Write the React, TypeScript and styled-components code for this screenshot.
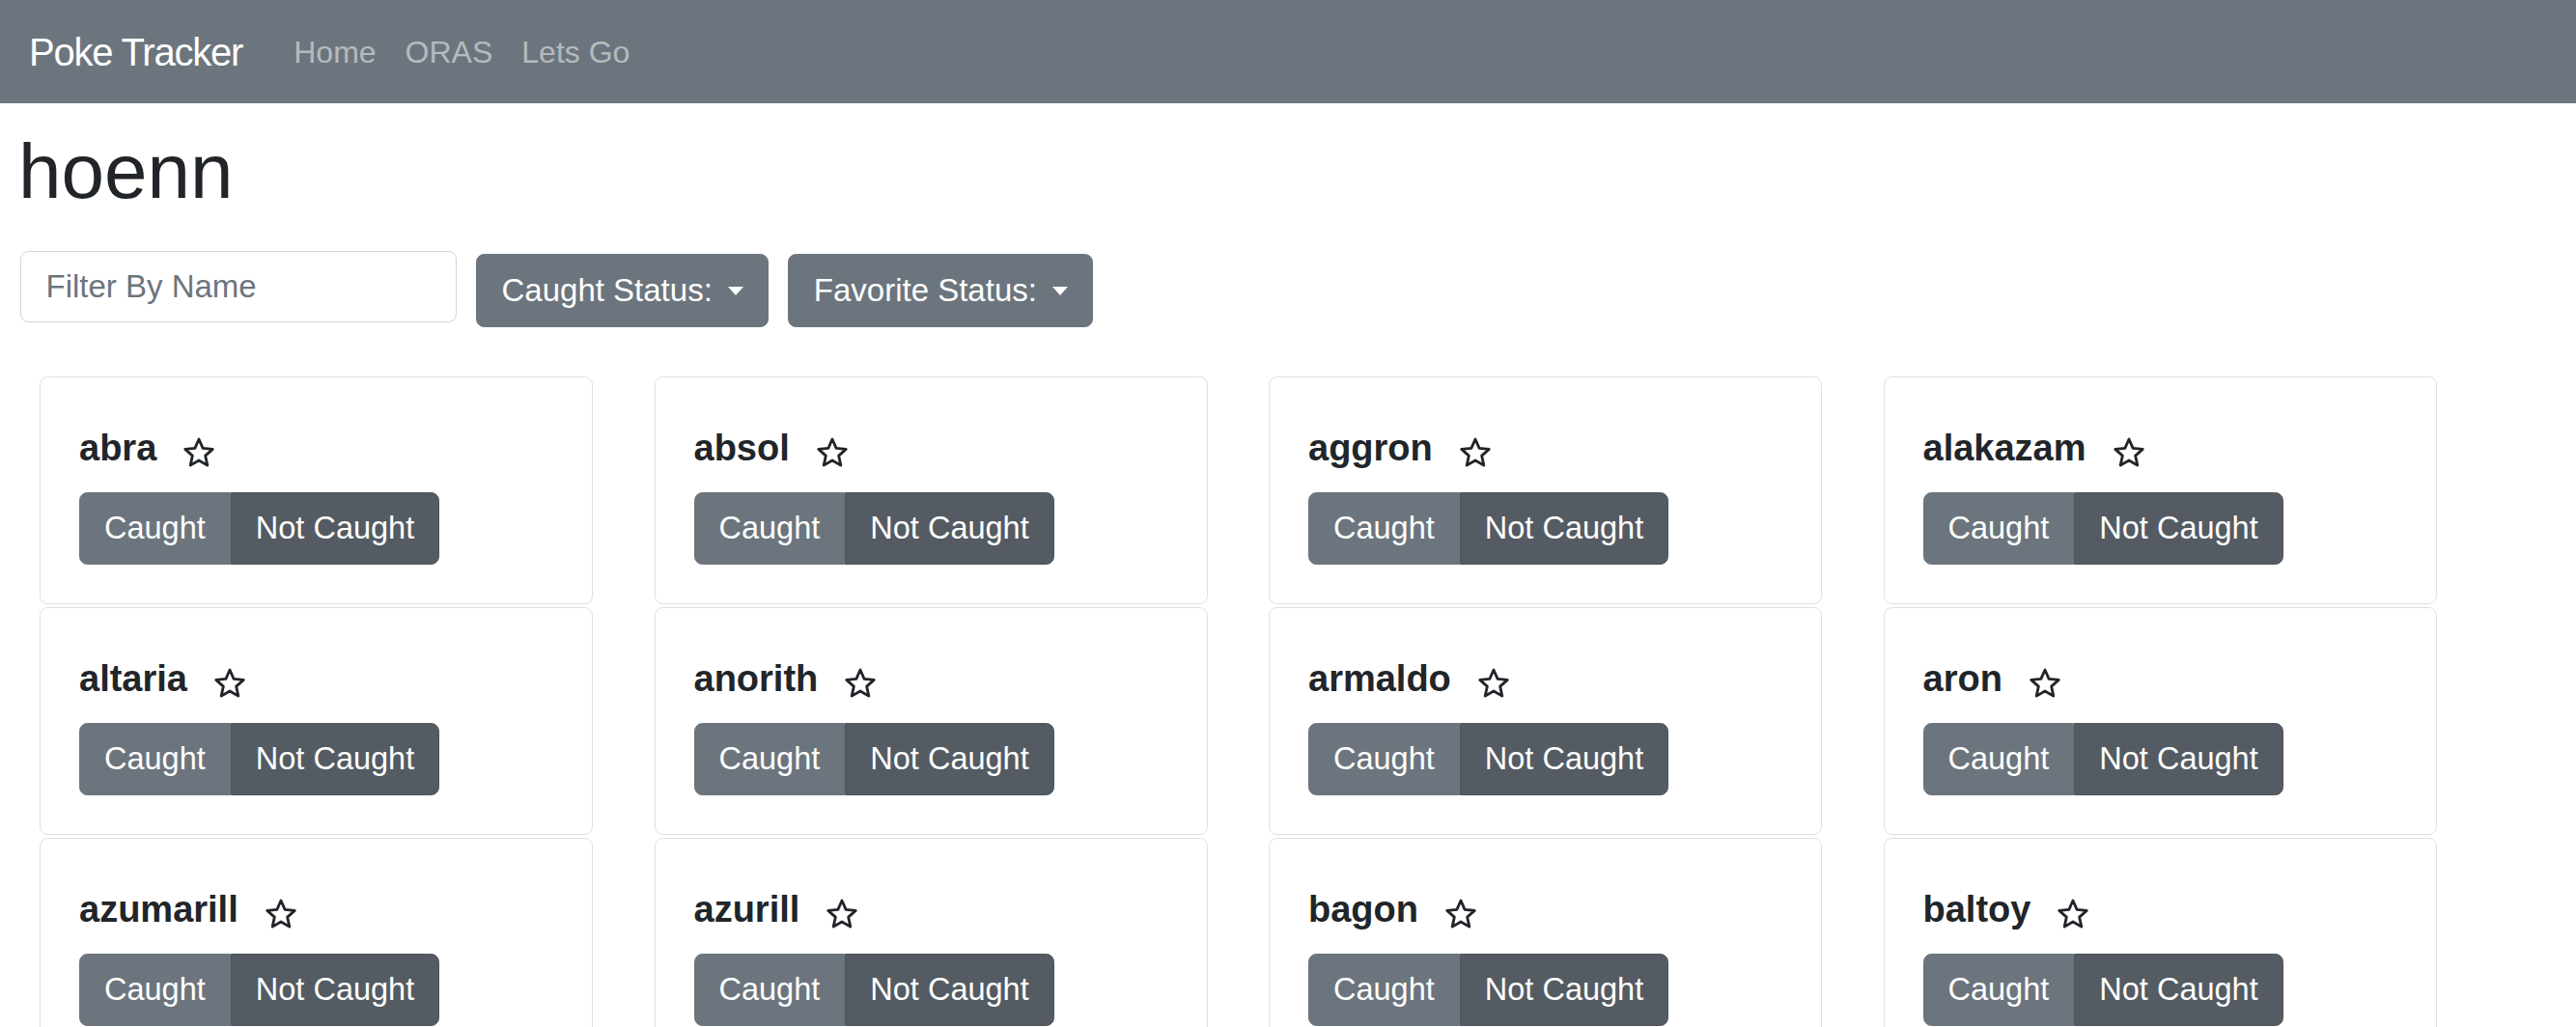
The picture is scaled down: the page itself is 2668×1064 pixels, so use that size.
import React from 'react';
import styled, { createGlobalStyle } from 'styled-components';

const GlobalStyle = createGlobalStyle`
  html, body {
    margin: 0;
    padding: 0;
    overflow: hidden;
    background: #fff;
  }
  body {
    font-family: "Liberation Sans", Arial, sans-serif;
    color: #212529;
  }
  * { box-sizing: border-box; }
`;

const pokemon = [
  'abra', 'absol', 'aggron', 'alakazam',
  'altaria', 'anorith', 'armaldo', 'aron',
  'azumarill', 'azurill', 'bagon', 'baltoy',
];

const Navbar = styled.nav`
  display: flex;
  align-items: center;
  height: 107px;
  padding: 0 30px;
  background: #6c757d;
`;

const Brand = styled.a`
  margin-right: 38px;
  font-size: 40px;
  letter-spacing: -1.2px;
  line-height: 1.5;
  color: #fff;
  text-decoration: none;
`;

const NavLinks = styled.div`
  display: flex;
  align-items: center;
`;

const NavLink = styled.a`
  padding: 0 15px;
  font-size: 32px;
  line-height: 1.5;
  color: rgba(255, 255, 255, 0.5);
  text-decoration: none;
`;

const Main = styled.main`
  padding: 0 21px;
`;

const Title = styled.h1`
  margin: 23px 0 0 -2px;
  font-size: 80px;
  font-weight: 400;
  line-height: 1.2;
  color: #212529;
`;

const Controls = styled.div`
  display: flex;
  align-items: flex-start;
  gap: 20px;
  margin-top: 34px;
`;

const FilterInput = styled.input`
  width: 452px;
  height: 74px;
  padding: 0 25.5px;
  border: 1px solid #ced4da;
  border-radius: 8.5px;
  font-family: inherit;
  font-size: 33px;
  color: #495057;
  outline: none;
  &::placeholder {
    color: #6c757d;
  }
`;

const DropdownButton = styled.button`
  display: flex;
  align-items: center;
  height: 76px;
  margin-top: 3px;
  padding: 0 25.5px;
  border: 1px solid #6c757d;
  border-radius: 8.5px;
  background: #6c757d;
  color: #fff;
  font-family: inherit;
  font-size: 33px;
  line-height: 1.5;
`;

const Caret = styled.span`
  display: inline-block;
  width: 0;
  height: 0;
  margin-left: 16px;
  border-top: 9px solid #fff;
  border-left: 8px solid transparent;
  border-right: 8px solid transparent;
`;

const CardGrid = styled.div`
  display: grid;
  grid-template-columns: repeat(4, 573px);
  column-gap: 63.5px;
  row-gap: 3px;
  margin-top: 51px;
  padding-left: 20px;
`;

const Card = styled.div`
  padding: 40px;
  border: 1px solid #dfdfdf;
  border-radius: 8.5px;
  background: #fff;
`;

const TitleRow = styled.div`
  display: flex;
  align-items: center;
  height: 66px;
  margin-bottom: 13px;
`;

const Name = styled.h5`
  margin: 0;
  font-size: 38px;
  font-weight: 700;
  line-height: 1;
  color: #212529;
`;

const StarSvg = styled.svg`
  width: 32px;
  height: 32px;
  margin-left: 28px;
  margin-top: 10px;
  overflow: visible;
`;

const ButtonGroup = styled.div`
  display: inline-flex;
`;

const StatusButton = styled.button<{ $active?: boolean; $first?: boolean }>`
  height: 75px;
  padding: 0 25px;
  border: 1px solid ${p => (p.$active ? '#4e555b' : '#6c757d')};
  background: ${p => (p.$active ? '#545b62' : '#6c757d')};
  color: #fff;
  font-family: inherit;
  font-size: 32.5px;
  line-height: 1.5;
  border-radius: ${p => (p.$first ? '8.5px 0 0 8.5px' : '0 8.5px 8.5px 0')};
`;

const Star = () => (
  <StarSvg viewBox="0 0 32 32">
    <polygon
      points="16,2 20.11,11.34 30.27,12.36 22.66,19.16 24.82,29.14 16,24 7.18,29.14 9.34,19.16 1.73,12.36 11.89,11.34"
      fill="none"
      stroke="#212529"
      strokeWidth="2.8"
      strokeLinejoin="round"
    />
  </StarSvg>
);

const PokeCard = ({ name }: { name: string }) => (
  <Card>
    <TitleRow>
      <Name>{name}</Name>
      <Star />
    </TitleRow>
    <ButtonGroup>
      <StatusButton $first>Caught</StatusButton>
      <StatusButton $active>Not Caught</StatusButton>
    </ButtonGroup>
  </Card>
);

export default function App() {
  return (
    <>
      <GlobalStyle />
      <Navbar>
        <Brand href="#">Poke Tracker</Brand>
        <NavLinks>
          <NavLink href="#">Home</NavLink>
          <NavLink href="#">ORAS</NavLink>
          <NavLink href="#">Lets Go</NavLink>
        </NavLinks>
      </Navbar>
      <Main>
        <Title>hoenn</Title>
        <Controls>
          <FilterInput placeholder="Filter By Name" />
          <DropdownButton>
            Caught Status:<Caret />
          </DropdownButton>
          <DropdownButton>
            Favorite Status:<Caret />
          </DropdownButton>
        </Controls>
        <CardGrid>
          {pokemon.map(p => (
            <PokeCard key={p} name={p} />
          ))}
        </CardGrid>
      </Main>
    </>
  );
}
